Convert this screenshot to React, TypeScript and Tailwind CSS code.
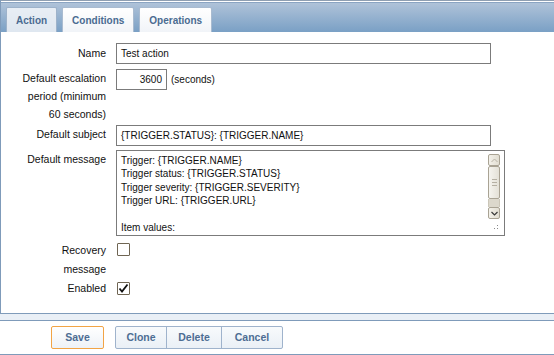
import React from 'react';

const TABS = ['Action', 'Conditions', 'Operations'];

const MESSAGE_LINES = [
  'Trigger: {TRIGGER.NAME}',
  'Trigger status: {TRIGGER.STATUS}',
  'Trigger severity: {TRIGGER.SEVERITY}',
  'Trigger URL: {TRIGGER.URL}',
  '',
  'Item values:',
];

function Checkbox({ checked }: { checked?: boolean }) {
  return (
    <div className="w-[13px] h-[13px] border border-[#6f6553] bg-white rounded-[1px] flex items-center justify-center">
      {checked && (
        <svg width="11" height="11" viewBox="0 0 11 11">
          <path d="M1.5 5.5 L4 8.5 L9.5 1.5" fill="none" stroke="#111" strokeWidth="1.8" />
        </svg>
      )}
    </div>
  );
}

function Scrollbar() {
  return (
    <div className="w-[12px] h-[65px] flex flex-col">
      {/* up */}
      <div className="h-[12px] border border-[#a9a394] rounded-[2px] bg-gradient-to-r from-[#f3f1ea] to-[#e2ded2] flex items-center justify-center">
        <svg width="7" height="5" viewBox="0 0 7 5">
          <path d="M0.5 4 L3.5 1 L6.5 4" fill="none" stroke="#b8b3a6" strokeWidth="1" />
        </svg>
      </div>
      {/* thumb */}
      <div className="h-[33px] border border-[#a9a394] rounded-[2px] bg-gradient-to-r from-[#f5f4ef] to-[#e4e1d7] flex flex-col items-center justify-center gap-[2px]">
        <div className="w-[5px] h-px bg-[#b5b0a3]" />
        <div className="w-[5px] h-px bg-[#b5b0a3]" />
        <div className="w-[5px] h-px bg-[#b5b0a3]" />
      </div>
      {/* track */}
      <div className="flex-1 bg-[#dcd8cc] border-x border-[#cbc6b8]" />
      {/* down */}
      <div className="h-[12px] border border-[#a9a394] rounded-[2px] bg-gradient-to-r from-[#f3f1ea] to-[#e2ded2] flex items-center justify-center">
        <svg width="7" height="5" viewBox="0 0 7 5">
          <path d="M0.5 1 L3.5 4 L6.5 1" fill="none" stroke="#3a3a3a" strokeWidth="1.2" />
        </svg>
      </div>
    </div>
  );
}

export default function App() {
  return (
    <div className="w-[554px] h-[355px] bg-white overflow-hidden font-['Liberation_Sans',Arial,sans-serif] text-[#111]">
      {/* panel */}
      <div className="border-l border-b border-[#7f9bba]">
        {/* tab header */}
        <div className="h-[32px] border-t border-[#8f9fb2] bg-gradient-to-b from-[#b3c5da] to-[#7aa0c5] shadow-[inset_0_1px_0_#ffffff,inset_0_2px_0_#8aa4c2] flex items-end gap-[5px] pl-[5px]">
          {TABS.map((t, i) => (
            <div
              key={t}
              className={`h-[25px] px-[9px] border border-b-0 rounded-t-[2px] flex items-center text-[10px] font-bold text-[#4a6b91] ${
                i === 0
                  ? 'bg-gradient-to-b from-[#e8eef5] to-[#dfe7f0] border-[#9db2ca]'
                  : 'bg-gradient-to-b from-white to-[#f1f4f8] border-[#a9bbd0]'
              }`}
            >
              {t}
            </div>
          ))}
        </div>

        {/* form */}
        <div className="pt-[11px] pb-[15px] text-[10.5px]">
          <div className="flex">
            <div className="ml-[21px] w-[84px] text-right leading-[21px]">Name</div>
            <div className="ml-[10px] w-[375px] h-[21px] border border-[#7b7b7b] px-[4px] text-[10px] leading-[19px]">
              Test action
            </div>
          </div>

          <div className="flex mt-[5px]">
            <div className="ml-[21px] w-[84px] text-right leading-[18px]">
              Default escalation period (minimum 60 seconds)
            </div>
            <div className="ml-[10px] flex items-start">
              <div className="w-[51px] h-[21px] border border-[#7b7b7b] px-[4px] text-right text-[10px] leading-[19px]">
                3600
              </div>
              <span className="ml-[4px] leading-[21px] text-[10px]">(seconds)</span>
            </div>
          </div>

          <div className="flex mt-[2px]">
            <div className="ml-[21px] w-[84px] text-right leading-[19px]">Default subject</div>
            <div className="ml-[10px] w-[375px] h-[21px] border border-[#7b7b7b] px-[4px] text-[10px] leading-[19px]">
              {'{TRIGGER.STATUS}: {TRIGGER.NAME}'}
            </div>
          </div>

          <div className="flex mt-[4px]">
            <div className="ml-[21px] w-[84px] text-right leading-[18px]">Default message</div>
            <div className="ml-[10px] w-[389px] h-[86px] border border-[#7b7b7b] flex pt-[3px] pl-[4px] pr-[4px]">
              <div className="flex-1 text-[10px] leading-[13.4px]">
                {MESSAGE_LINES.map((l, i) => (
                  <div key={i} className="h-[13.4px] whitespace-pre">
                    {l}
                  </div>
                ))}
              </div>
              <div className="flex flex-col items-end">
                <Scrollbar />
                {/* resize grip */}
                <svg className="mt-[5px] mr-[1px]" width="6" height="6" viewBox="0 0 6 6">
                  <rect x="4" y="1" width="1" height="1" fill="#8a8a8a" />
                  <rect x="1" y="4" width="1" height="1" fill="#8a8a8a" />
                  <rect x="4" y="4" width="1" height="1" fill="#8a8a8a" />
                </svg>
              </div>
            </div>
          </div>

          <div className="flex mt-[5px]">
            <div className="ml-[21px] w-[84px] text-right leading-[19px]">Recovery message</div>
            <div className="ml-[11px] pt-[2px]">
              <Checkbox />
            </div>
          </div>

          <div className="flex">
            <div className="ml-[21px] w-[84px] text-right leading-[19px]">Enabled</div>
            <div className="ml-[11px] pt-[3px]">
              <Checkbox checked />
            </div>
          </div>
        </div>
      </div>

      {/* spacer strip */}
      <div className="h-[6px] bg-[#e9eff6]" />

      {/* buttons */}
      <div className="border-y border-[#7f9bba] h-[35px] flex items-center pl-[51px] text-[10.5px] font-bold text-[#4d6d93]">
        <button className="w-[53px] h-[23px] border border-[#f2a445] rounded-[2px] bg-gradient-to-b from-white to-[#eef2f7]">
          Save
        </button>
        <div className="ml-[11px] flex h-[23px] border border-[#9fb3cc] rounded-[2px] bg-gradient-to-b from-[#f8fafc] to-[#eaf0f6]">
          <button className="w-[51px] border-r border-[#9fb3cc]">Clone</button>
          <button className="w-[55px] border-r border-[#9fb3cc]">Delete</button>
          <button className="w-[60px]">Cancel</button>
        </div>
      </div>
    </div>
  );
}
